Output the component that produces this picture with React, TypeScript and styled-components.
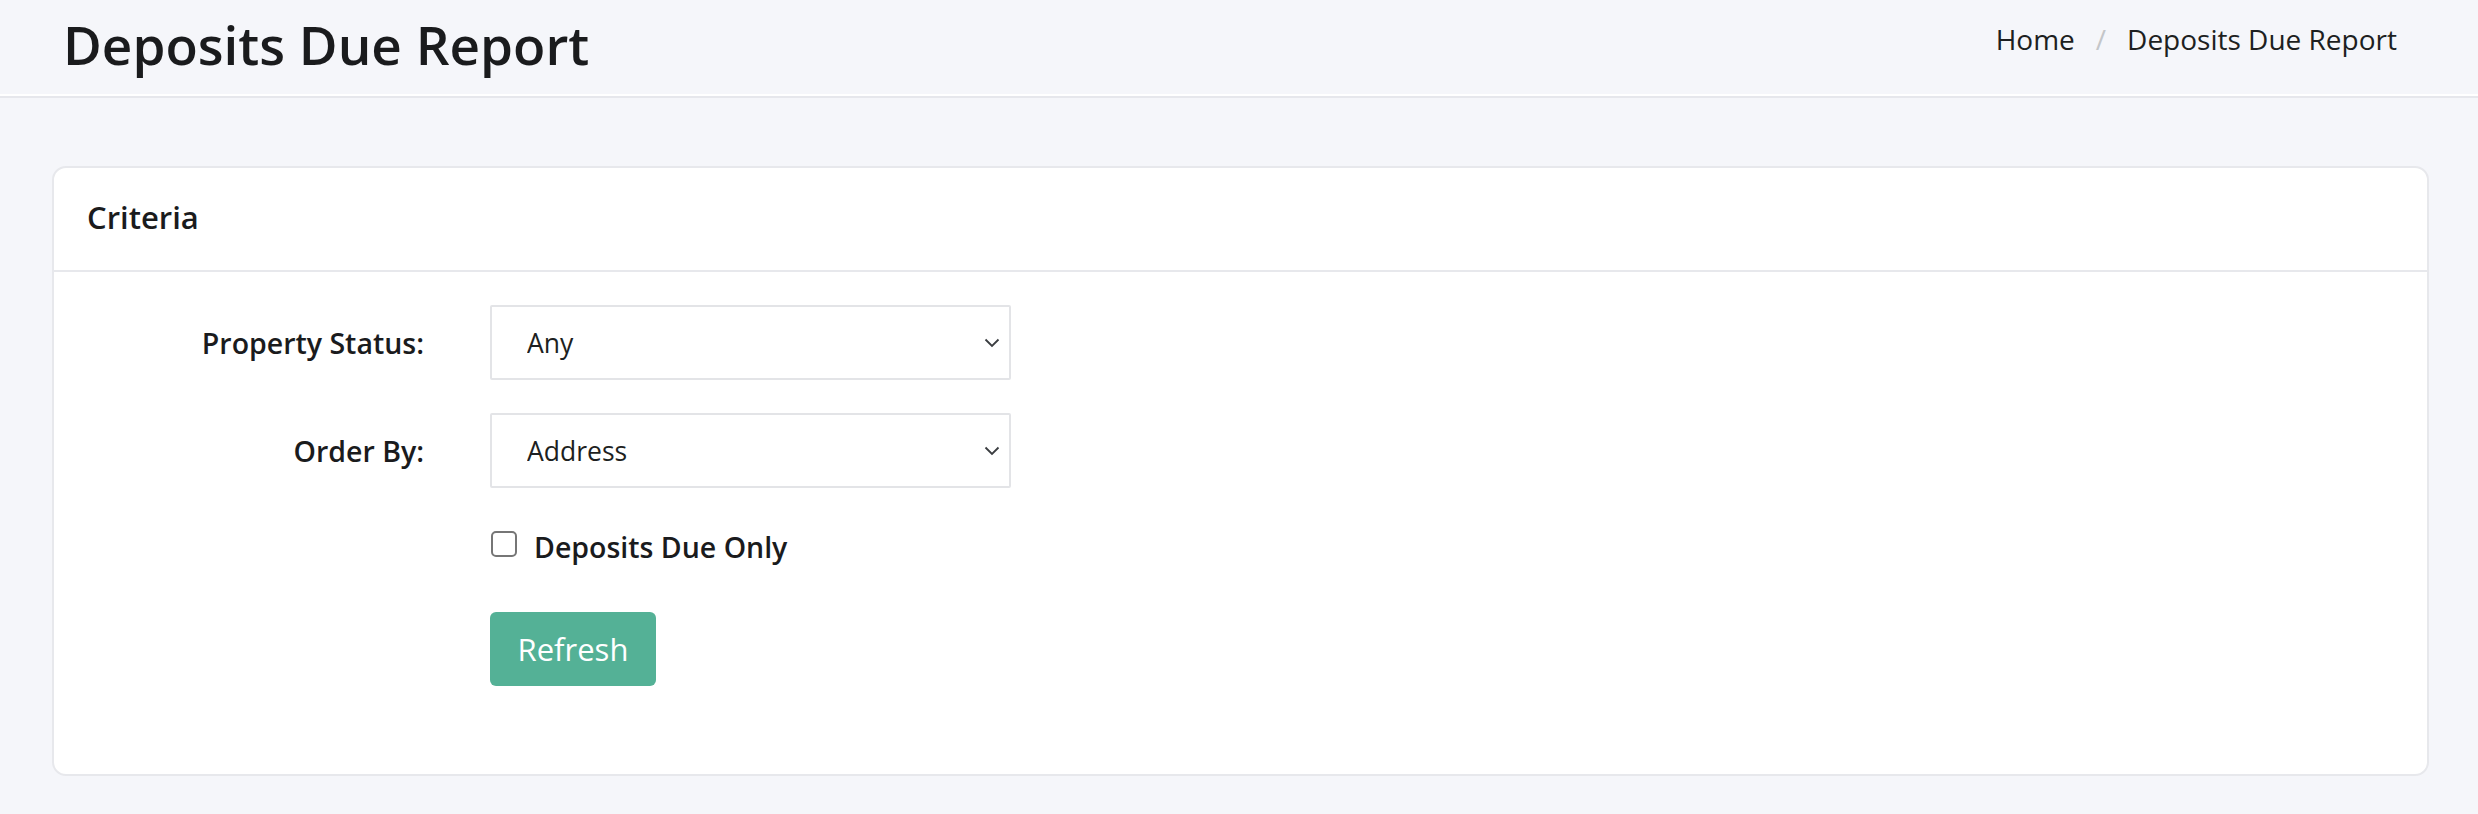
import styled, { createGlobalStyle } from 'styled-components';

const GlobalStyle = createGlobalStyle`
  * {
    box-sizing: border-box;
  }
  body {
    margin: 0;
    background: #f5f6fa;
    font-family: "Open Sans", "Liberation Sans", sans-serif;
    color: #1d1f21;
  }
`;

const Chevron = () => (
  <svg width="16" height="10" viewBox="0 0 16 10" fill="none">
    <path d="M1.5 1.5 L8 8 L14.5 1.5" stroke="#3a3d40" strokeWidth="1.8" />
  </svg>
);

type SelectProps = {
  value: string;
  options: string[];
};

function SelectBox({ value, options }: SelectProps) {
  return (
    <StyledSelectWrap>
      <StyledSelect defaultValue={value}>
        {options.map((option) => (
          <option key={option}>{option}</option>
        ))}
      </StyledSelect>
      <StyledChevron>
        <Chevron />
      </StyledChevron>
    </StyledSelectWrap>
  );
}

function App() {
  return (
    <>
      <GlobalStyle />
      <StyledHeader>
        <StyledTitle>Deposits Due Report</StyledTitle>
        <StyledBreadcrumb>
          <span>Home</span>
          <StyledSeparator>/</StyledSeparator>
          <span>Deposits Due Report</span>
        </StyledBreadcrumb>
      </StyledHeader>

      <StyledCard>
        <StyledCardHeader>Criteria</StyledCardHeader>
        <StyledCardBody>
          <StyledFormRow>
            <StyledLabel>Property Status:</StyledLabel>
            <SelectBox value="Any" options={['Any', 'Active', 'Inactive']} />
          </StyledFormRow>
          <StyledFormRow>
            <StyledLabel>Order By:</StyledLabel>
            <SelectBox value="Address" options={['Address', 'Deposit Due']} />
          </StyledFormRow>
          <StyledCheckRow>
            <span />
            <StyledCheckLabel>
              <StyledCheckbox type="checkbox" />
              Deposits Due Only
            </StyledCheckLabel>
          </StyledCheckRow>
          <StyledFormRow>
            <span />
            <div>
              <StyledButton type="button">Refresh</StyledButton>
            </div>
          </StyledFormRow>
        </StyledCardBody>
      </StyledCard>
    </>
  );
}

const StyledHeader = styled.header`
  display: flex;
  justify-content: space-between;
  align-items: center;
  height: 98px;
  padding: 0 81px 6px 63px;
  background: #f5f6fa;
  border-bottom: 2px solid #e6e7ec;
  box-shadow: inset 0 -2px 0 #ffffff;
`;

const StyledTitle = styled.h1`
  margin: 0;
  font-size: 53px;
  font-weight: 600;
  line-height: 1.2;
  color: #1a1b1d;
`;

const StyledBreadcrumb = styled.nav`
  display: flex;
  align-items: center;
  gap: 21px;
  margin-bottom: 12px;
  font-size: 28px;
  color: #1d1f21;
`;

const StyledSeparator = styled.span`
  color: #c4c6c9;
`;

const StyledCard = styled.section`
  margin: 68px 49px 0 52px;
  background: #ffffff;
  border: 2px solid #e7e8ec;
  border-radius: 14px;
`;

const StyledCardHeader = styled.div`
  height: 104px;
  display: flex;
  align-items: center;
  padding: 0 33px 4px;
  border-bottom: 2px solid #e7e8ec;
  font-size: 31px;
  font-weight: 600;
  color: #1a1b1d;
`;

const StyledCardBody = styled.div`
  display: flex;
  flex-direction: column;
  gap: 33px;
  padding: 33px 33px 88px;
`;

const StyledFormRow = styled.div`
  display: grid;
  grid-template-columns: 337px 521px;
  column-gap: 66px;
  align-items: center;
`;

const StyledCheckRow = styled(StyledFormRow)`
  margin-top: 6px;
  margin-bottom: -3px;
`;

const StyledLabel = styled.label`
  text-align: right;
  font-size: 28.5px;
  font-weight: 600;
  color: #1a1b1d;
`;

const StyledSelectWrap = styled.div`
  position: relative;
  height: 75px;
`;

const StyledSelect = styled.select`
  appearance: none;
  width: 100%;
  height: 100%;
  padding: 0 60px 0 35px;
  border: 2px solid #e3e4e7;
  border-radius: 2px;
  background: #ffffff;
  font-family: "Open Sans", "Liberation Sans", sans-serif;
  font-size: 26.5px;
  color: #1d1f21;
  outline: none;
`;

const StyledChevron = styled.span`
  position: absolute;
  right: 11px;
  top: 50%;
  transform: translateY(-50%);
  display: flex;
  pointer-events: none;
`;

const StyledCheckLabel = styled.label`
  display: flex;
  align-items: center;
  gap: 17px;
  font-size: 28.5px;
  font-weight: 600;
  color: #1a1b1d;
  line-height: 40px;
`;

const StyledCheckbox = styled.input`
  appearance: none;
  width: 26px;
  height: 26px;
  margin: -6px 0 0 1px;
  border: 2px solid #767676;
  border-radius: 5px;
  background: #ffffff;
`;

const StyledButton = styled.button`
  width: 166px;
  height: 74px;
  margin-top: 15px;
  border: none;
  border-radius: 6px;
  background: #54b196;
  color: #ffffff;
  font-family: "Open Sans", "Liberation Sans", sans-serif;
  font-size: 31px;
  cursor: pointer;
`;

export default App;
